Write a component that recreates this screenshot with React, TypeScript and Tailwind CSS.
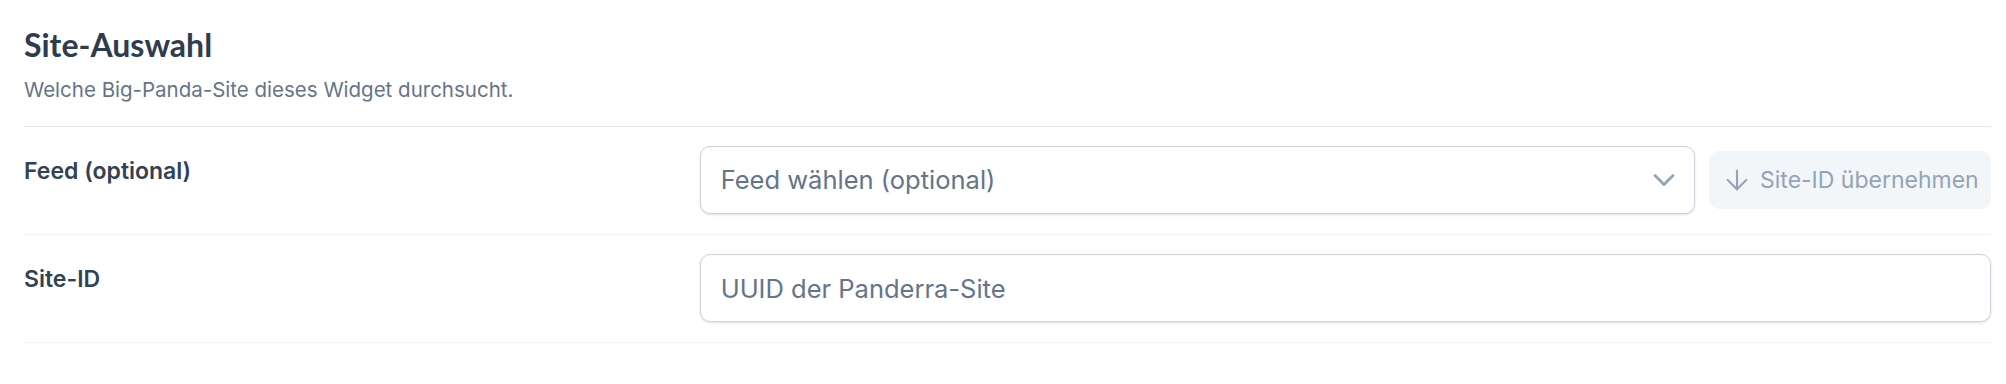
import { ArrowDown, ChevronDown } from "lucide-react";

const sans = "font-['Inter','Noto_Sans',sans-serif]";

function FieldRow({ label, children }: { label: string; children: React.ReactNode }) {
  return (
    <div className="grid grid-cols-[1fr_2fr] gap-[30px] border-b border-[#f1f4f7] pt-[19px] pb-[20px]">
      <div className="pt-[10px] text-[23px] leading-[30px] font-semibold text-[#334155]">{label}</div>
      <div>{children}</div>
    </div>
  );
}

export default function App() {
  return (
    <div className={`${sans} min-h-screen bg-white pt-[25px] pl-6 pr-[15px]`}>
      {/* Header */}
      <div className="border-b border-[#e2e8f0] pb-[21px]">
        <h2 className="font-['Lato',sans-serif] text-[32px] leading-[40px] font-bold text-[#2f3b4f]">
          Site-Auswahl
        </h2>
        <p className="mt-[10px] text-[20.5px] leading-[30px] text-[#64748b]">
          Welche Big-Panda-Site dieses Widget durchsucht.
        </p>
      </div>

      <FieldRow label="Feed (optional)">
        <div className="flex items-center gap-[14px]">
          <div className="flex-1 h-[68px] flex items-center justify-between pl-[20px] pr-[12px] rounded-[10px] border border-[#cbd5e1] bg-white shadow-sm">
            <span className="text-[25.5px] text-[#64748b]">Feed wählen (optional)</span>
            <ChevronDown size={36} strokeWidth={1.9} className="text-[#94a3b8]" />
          </div>
          <button
            disabled
            className="h-[58px] w-[282px] shrink-0 flex items-center gap-[7px] pl-[12px] pr-[14px] rounded-[10px] bg-[#f3f6f9] text-[23px] whitespace-nowrap text-[#94a3b8]"
          >
            <ArrowDown size={32} strokeWidth={1.6} className="shrink-0" />
            <span>Site-ID übernehmen</span>
          </button>
        </div>
      </FieldRow>

      <FieldRow label="Site-ID">
        <input
          type="text"
          placeholder="UUID der Panderra-Site"
          className="w-full h-[68px] px-[20px] rounded-[10px] border border-[#cbd5e1] bg-white shadow-sm text-[25.5px] text-[#334155] placeholder:text-[#64748b] focus:outline-none"
        />
      </FieldRow>
    </div>
  );
}
